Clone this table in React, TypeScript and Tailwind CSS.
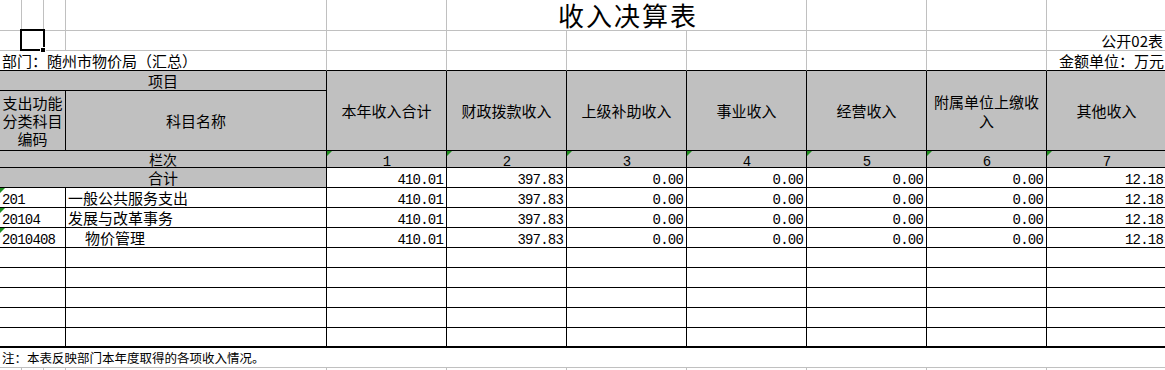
const cjk = "font-['Noto_Sans_CJK_SC',sans-serif] [text-spacing-trim:space-all]";
const mono = "font-['Liberation_Mono',monospace] text-[14px] tracking-[-0.8px]";

const gridCell = "border-r border-b border-[#c0c0c0]";
const hdr = "bg-[#c0c0c0] border-r border-b border-black";

const headers = ["本年收入合计", "财政拨款收入", "上级补助收入", "事业收入", "经营收入", "附属单位上缴收入", "其他收入"];
const values = ["410.01", "397.83", "0.00", "0.00", "0.00", "0.00", "12.18"];

const rows = [
  { code: "201", name: "一般公共服务支出", indent: false },
  { code: "20104", name: "发展与改革事务", indent: false },
  { code: "2010408", name: "物价管理", indent: true },
  { code: "", name: "", indent: false },
  { code: "", name: "", indent: false },
  { code: "", name: "", indent: false },
  { code: "", name: "", indent: false },
  { code: "", name: "", indent: false },
];

// green "number stored as text" marker
const Flag = () => (
  <span className="absolute left-0 top-0 w-[5px] h-[5px] bg-[#1f8f1f] [clip-path:polygon(0_0,100%_0,0_100%)]" />
);

const Blank = ({ n }: { n: number }) => (
  <>
    {Array.from({ length: n }).map((_, i) => (
      <div key={i} className={gridCell} />
    ))}
  </>
);

export default function App() {
  return (
    <div className={`w-[1165px] h-[370px] overflow-hidden bg-white text-black ${cjk} text-[15px]`}>
      <div className="grid w-[1167px] grid-cols-[22px_22px_22px_261px_120px_120px_120px_120px_120px_120px_120px] grid-rows-[31px_20px_20px_20px_60px_17px_20px_20px_20px_20px_20px_20px_20px_20px_20px_20px_20px]">
        {/* title row */}
        <Blank n={5} />
        <div className={`${gridCell} col-span-3 flex items-end justify-center`}>
          <span className="text-[26px] leading-[28px] tracking-[2px] pl-[3px] pb-[1px]">收入决算表</span>
        </div>
        <Blank n={3} />

        {/* 公开02表 row */}
        <div className={gridCell} />
        <div className={`${gridCell} relative`}>
          <div className="absolute -left-[2px] -top-[2px] w-[25px] h-[22px] border-[2px] border-black" />
          <div className="absolute left-[18px] top-[16px] w-[6px] h-[6px] bg-black border border-white" />
        </div>
        <Blank n={8} />
        <div className={`${gridCell} flex items-center justify-end pr-[3px] leading-[19px]`}>公开02表</div>

        {/* 部门 row */}
        <div className="col-span-4 border-r border-b border-r-[#c0c0c0] border-b-black flex items-center pl-[2px] leading-[19px] whitespace-nowrap">
          部门：随州市物价局（汇总）
        </div>
        {Array.from({ length: 6 }).map((_, i) => (
          <div key={i} className="border-r border-b border-r-[#c0c0c0] border-b-black" />
        ))}
        <div className="border-r border-b border-r-[#c0c0c0] border-b-black flex items-center justify-end pr-[2px] leading-[19px] whitespace-nowrap">
          金额单位：万元
        </div>

        {/* header */}
        <div className={`${hdr} col-span-4 flex items-center justify-center leading-[19px]`}>项目</div>
        {headers.map((h) => (
          <div key={h} className={`${hdr} row-span-2 flex items-center justify-center text-center leading-[19px] px-[1px]`}>
            {h}
          </div>
        ))}
        <div className={`${hdr} col-span-3 flex items-center justify-center text-center leading-[18px]`}>
          支出功能分类科目编码
        </div>
        <div className={`${hdr} flex items-center justify-center leading-[19px]`}>科目名称</div>

        {/* 栏次 */}
        <div className={`${hdr} col-span-4 flex items-center justify-center text-[14px] leading-[16px]`}>栏次</div>
        {headers.map((_, i) => (
          <div key={i} className={`${hdr} relative flex items-end justify-center`}>
            <Flag />
            <span className={`${mono} leading-[10px]`}>{i + 1}</span>
          </div>
        ))}

        {/* 合计 */}
        <div className={`${hdr} col-span-4 flex items-center justify-center leading-[19px]`}>合计</div>
        {values.map((v, i) => (
          <div key={i} className="border-r border-b border-black flex items-end justify-end pr-[3px]">
            <span className={`${mono} leading-[14px]`}>{v}</span>
          </div>
        ))}

        {/* data rows */}
        {rows.map((r, ri) => {
          const b = ri === rows.length - 1 ? "border-r border-b-2 border-black" : "border-r border-b border-black";
          return (
            <div key={ri} className="contents">
              <div className={`${b} col-span-3 relative flex items-end pl-[2px]`}>
                {r.code && <Flag />}
                <span className={`${mono} leading-[14px]`}>{r.code}</span>
              </div>
              <div className={`${b} flex items-center leading-[19px] ${r.indent ? "pl-[19px]" : "pl-[2px]"}`}>{r.name}</div>
              {values.map((v, i) => (
                <div key={i} className={`${b} flex items-end justify-end pr-[3px]`}>
                  {r.code && <span className={`${mono} leading-[14px]`}>{v}</span>}
                </div>
              ))}
            </div>
          );
        })}

        {/* note */}
        <div className="col-span-11 border-b border-[#c0c0c0] flex items-center pl-[2px] text-[12.5px] leading-[19px]">
          注：本表反映部门本年度取得的各项收入情况。
        </div>
        <Blank n={11} />
      </div>
    </div>
  );
}
